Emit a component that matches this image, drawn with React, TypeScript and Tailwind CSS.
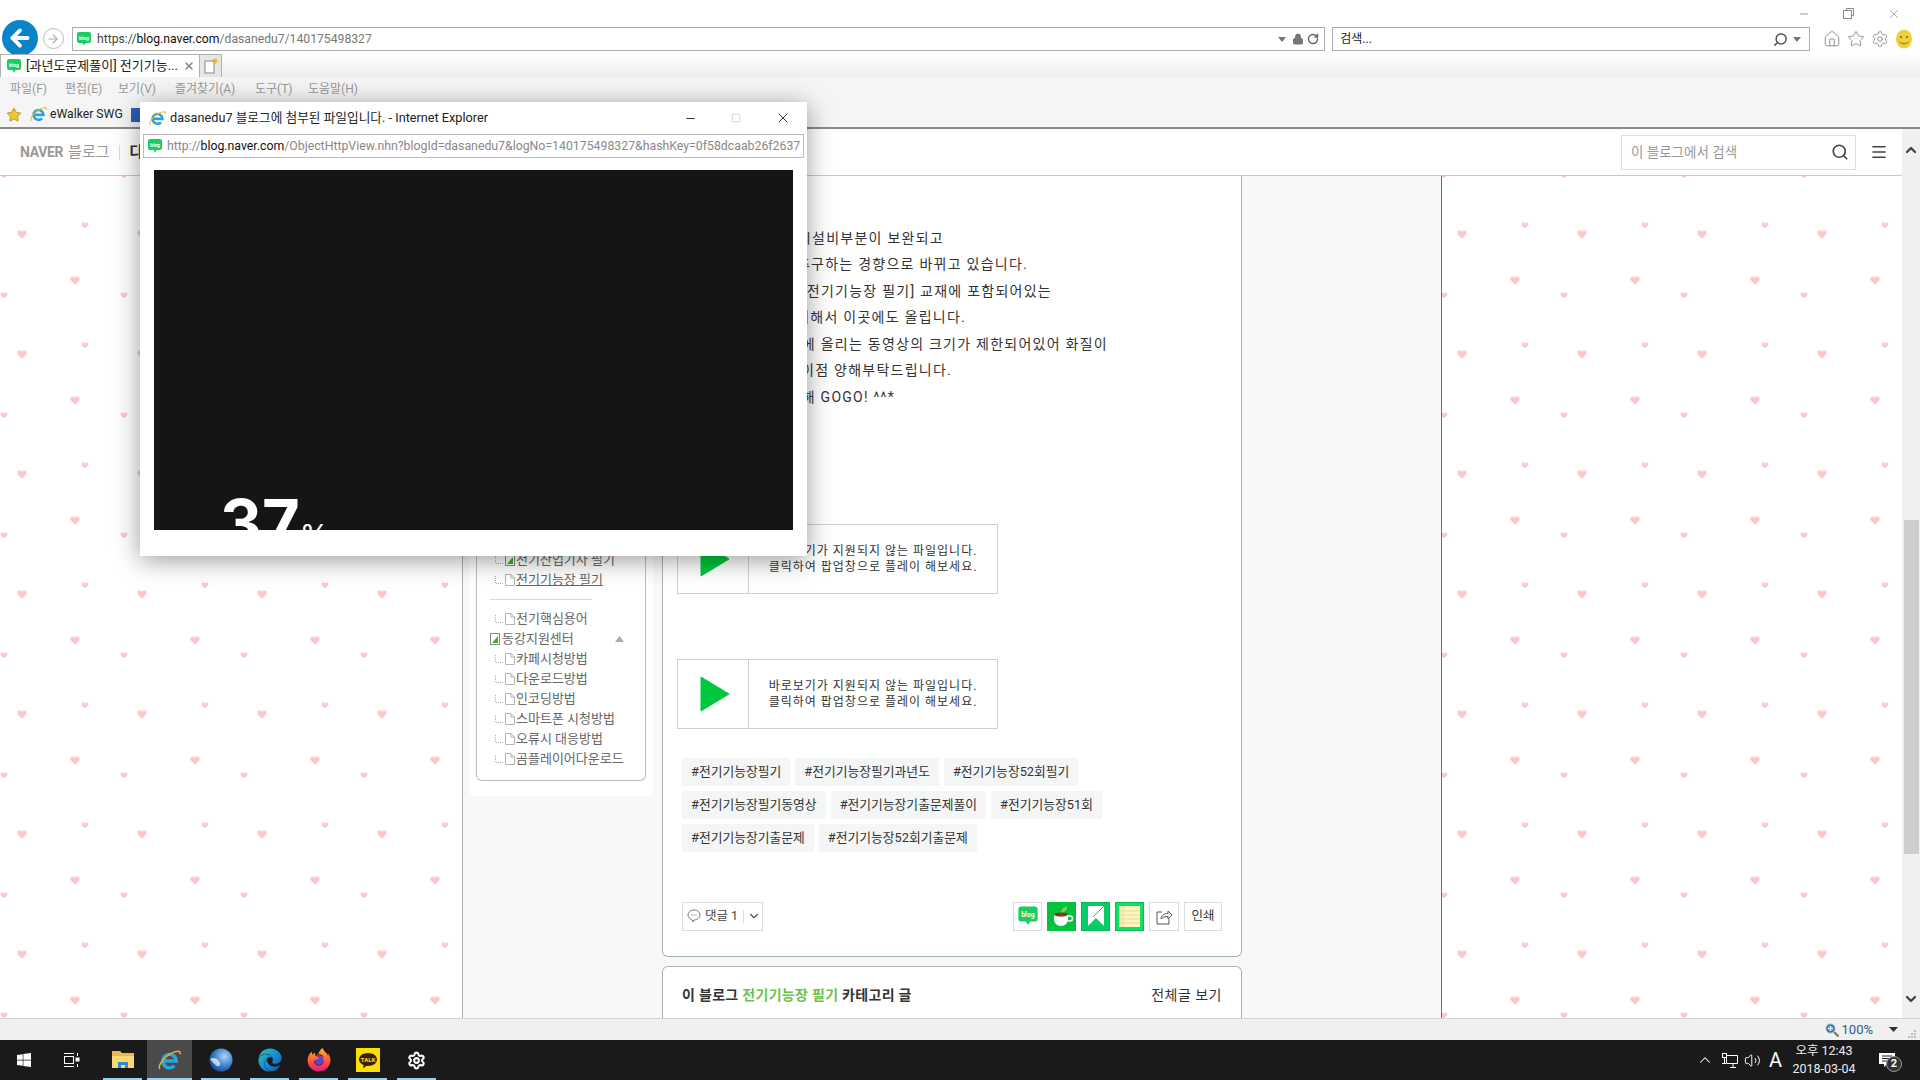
import React from "react";
import { ArrowLeft, ArrowRight, ChevronDown, ChevronUp, Home, Lock, Menu, RotateCw, Search, Settings, Star, Volume2, X, Minus, Square } from "lucide-react";
import { FaEdge, FaFirefoxBrowser, FaWindows } from "react-icons/fa";

const bodyLines = [
  { text: "이번 전기기능장 필기시험부터 시설비부분이 보완되고", w: "w-[281px]" },
  { text: "최근 시험은 실무를 추구하는 경향으로 바뀌고 있습니다.", w: "w-[365px]" },
  { text: "그래서 다산에듀 [전기기능장 필기] 교재에 포함되어있는", w: "w-[389px]" },
  { text: "수험생 여러분을 위해서 이곳에도 올립니다.", w: "w-[303px]" },
  { text: "블로그에 올리는 동영상의 크기가 제한되어있어 화질이", w: "w-[445px]" },
  { text: "조금 떨어지는 이점 양해부탁드립니다.", w: "w-[289px]" },
  { text: "전기기능장 합격을 향해 GOGO! ^^*", w: "w-[232px]" },
];

const tagRows = [
  ["#전기기능장필기", "#전기기능장필기과년도", "#전기기능장52회필기"],
  ["#전기기능장필기동영상", "#전기기능장기출문제풀이", "#전기기능장51회"],
  ["#전기기능장기출문제", "#전기기능장52회기출문제"],
];

const sideItems = [
  { label: "전기산업기사 필기", kind: "folder" },
  { label: "전기기능장 필기", kind: "doc", active: true },
  { label: "", kind: "line" },
  { label: "전기핵심용어", kind: "doc" },
  { label: "동강지원센터", kind: "root" },
  { label: "카페시청방법", kind: "doc" },
  { label: "다운로드방법", kind: "doc" },
  { label: "인코딩방법", kind: "doc" },
  { label: "스마트폰 시청방법", kind: "doc" },
  { label: "오류시 대응방법", kind: "doc" },
  { label: "곰플레이어다운로드", kind: "doc" },
];

const menus = [
  { label: "파일(F)", w: "w-[55px]" },
  { label: "편집(E)", w: "w-[53px]" },
  { label: "보기(V)", w: "w-[57px]" },
  { label: "즐겨찾기(A)", w: "w-[80px]" },
  { label: "도구(T)", w: "w-[53px]" },
  { label: "도움말(H)", w: "w-[60px]" },
];

function BlogIcon({ size = 16 }: { size?: number }) {
  return (
    <svg width={size} height={size} viewBox="0 0 16 16" className="shrink-0">
      <path d="M3 1h10a2 2 0 0 1 2 2v7a2 2 0 0 1-2 2H9.6L8 14.5 6.4 12H3a2 2 0 0 1-2-2V3a2 2 0 0 1 2-2z" fill="#19ce60" />
      <text x="8" y="8.6" textAnchor="middle" fontSize="5" fontWeight="700" fill="#fff" fontFamily="Roboto, sans-serif">blog</text>
    </svg>
  );
}

function IeIcon({ size = 18 }: { size?: number }) {
  return (
    <svg width={size} height={size} viewBox="0 0 24 24" className="shrink-0">
      <path d="M5.5 12.5h13.5a7 7 0 1 0-2 5" fill="none" stroke="#2ba3e0" strokeWidth="3.6" />
      <path d="M2 21C-1 17 8 7 14 4.5c5-2.5 10-3.5 9 1" fill="none" stroke="#e8b71c" strokeWidth="1.5" />
    </svg>
  );
}

function Hearts() {
  const heart = "M0 -1.6C-.8 -3 -3.6 -3.2 -3.6 -.9C-3.6 .9 -1.4 2.2 0 3.4C1.4 2.2 3.6 .9 3.6 -.9C3.6 -3.2 .8 -3 0 -1.6Z";
  return (
    <svg className="absolute inset-0 h-full w-full">
      <defs>
        <pattern id="hearts" width="120" height="120" x="0" y="65" patternUnits="userSpaceOnUse">
          <path d={heart} fill="#ffc7c9" transform="translate(22 113) scale(1.3)" />
          <path d={heart} fill="#ffc7c9" transform="translate(85 104) scale(.95)" />
          <path d={heart} fill="#ffc7c9" transform="translate(75 39) scale(1.3)" />
          <path d={heart} fill="#ffc7c9" transform="translate(4 54) scale(.95)" />
        </pattern>
      </defs>
      <rect width="100%" height="100%" fill="url(#hearts)" />
    </svg>
  );
}

function PlayBox({ className }: { className?: string }) {
  return (
    <div className={`ml-[14px] flex h-[70px] w-[321px] border border-[#cfcfcf] bg-white ${className}`}>
      <div className="flex w-[71px] items-center justify-center border-r border-[#cfcfcf] pl-[3px]">
        <svg width="30" height="36" viewBox="0 0 30 36">
          <path d="M1 1 29 18 1 35z" fill="#00c73c" stroke="#00c73c" strokeLinejoin="round" />
        </svg>
      </div>
      <div className="flex flex-1 flex-col items-center justify-center text-[12px] leading-[16px] tracking-[1px] text-[#333]">
        <span>바로보기가 지원되지 않는 파일입니다.</span>
        <span>클릭하여 팝업창으로 플레이 해보세요.</span>
      </div>
    </div>
  );
}

function SideRow({ item }: { item: (typeof sideItems)[number] }) {
  if (item.kind === "line") {
    return <div className="mx-[13px] my-[9px] h-px w-[102px] shrink-0 bg-[#d8d8d8]" />;
  }
  if (item.kind === "root") {
    return (
      <div className="flex h-5 shrink-0 items-center pl-[13px] text-[13px] text-[#666]">
        <svg width="10" height="12" viewBox="0 0 10 12" className="mr-[2px]">
          <rect x=".5" y=".5" width="9" height="11" fill="#fff" stroke="#8a8a8a" />
          <path d="M2 10 8 3v7z" fill="#4aa82c" />
        </svg>
        {item.label}
        <svg width="9" height="6" viewBox="0 0 9 6" className="ml-[41px]">
          <path d="M4.5 0 9 6H0z" fill="#aaa" />
        </svg>
      </div>
    );
  }
  return (
    <div className="flex h-5 shrink-0 items-center pl-[18px] text-[13px] text-[#666]">
      <svg width="9" height="9" viewBox="0 0 9 9" className="mr-[1px]">
        <path d="M.5 0v7.5H8" fill="none" stroke="#aaa" strokeDasharray="1 1" />
      </svg>
      <svg width="10" height="12" viewBox="0 0 10 12" className="mr-[1px]">
        {item.kind === "doc" ? (
          <path d="M.5.5H6L9.5 4v7.5H.5zM6 .5V4h3.5" fill="#fff" stroke="#b5b5b5" />
        ) : (
          <>
            <rect x=".5" y=".5" width="9" height="11" fill="#fff" stroke="#8a8a8a" />
            <path d="M2 10 8 3v7z" fill="#4aa82c" />
          </>
        )}
      </svg>
      <span className={item.active ? "underline" : ""}>{item.label}</span>
    </div>
  );
}

function Chrome() {
  return (
    <div className="shrink-0 border-b-2 border-[#8a8a8a] bg-white">
      {/* title + address row */}
      <div className="flex h-[54px] items-start bg-white">
        <div className="mt-[20px] ml-[2px] flex h-[36px] w-[36px] items-center justify-center rounded-full bg-[#0a84c8]">
          <ArrowLeft size={26} strokeWidth={3.5} className="text-white" />
        </div>
        <div className="mt-[28px] ml-[5px] flex h-[21px] w-[21px] items-center justify-center rounded-full border border-[#bbb]">
          <ArrowRight size={14} className="text-[#aaa]" />
        </div>
        <div className="mt-[27px] ml-[8px] flex h-[24px] w-[1254px] items-center border border-[#adadad] pr-[5px] pl-[3px]">
          <BlogIcon size={16} />
          <span className="ml-[5px] text-[12.2px] text-[#444]">
            https://<span className="text-[#111]">blog.naver.com</span>
            <span className="text-[#777]">/dasanedu7/140175498327</span>
          </span>
          <svg width="8" height="5" viewBox="0 0 8 5" className="mr-[6px] ml-auto">
            <path d="M0 0h8L4 5z" fill="#777" />
          </svg>
          <Lock size={12} fill="#777" className="mr-[3px] text-[#777]" />
          <RotateCw size={12} strokeWidth={3} className="text-[#666]" />
        </div>
        <div className="mt-[27px] ml-[7px] flex h-[24px] w-[478px] items-center border border-[#adadad] pr-[8px] pl-[7px]">
          <span className="text-[12px] text-[#222]">검색...</span>
          <Search size={15} strokeWidth={2.4} className="ml-auto -scale-x-100 text-[#555]" />
          <svg width="8" height="5" viewBox="0 0 8 5" className="ml-[5px]">
            <path d="M0 0h8L4 5z" fill="#777" />
          </svg>
        </div>
        <div className="ml-[12px] flex w-[98px] flex-col items-end">
          <div className="flex h-[27px] w-[122px] shrink-0 items-center justify-between pr-[19px]">
            <Minus size={12} className="text-[#999]" />
            <svg width="11" height="11" viewBox="0 0 11 11" fill="none" stroke="#888">
              <path d="M3.5 2.5V.5h7v7h-2" />
              <rect x=".5" y="2.5" width="8" height="8" />
            </svg>
            <X size={14} strokeWidth={1.2} className="text-[#888]" />
          </div>
          <div className="flex h-[24px] w-[98px] items-center gap-[6px] pl-[1px]">
            <Home size={18} strokeWidth={1.2} className="text-[#888]" />
            <Star size={18} strokeWidth={1.2} className="text-[#888]" />
            <Settings size={18} strokeWidth={1.2} className="text-[#888]" />
            <svg width="18" height="20" viewBox="0 0 18 20">
              <ellipse cx="9" cy="10" rx="8" ry="9.5" fill="#f0cf3c" />
              <circle cx="6" cy="8" r="1" fill="#7a6410" />
              <circle cx="12" cy="8" r="1" fill="#7a6410" />
              <path d="M4.5 12.5c2.5 3 6.5 3 9 0" fill="none" stroke="#7a6410" />
            </svg>
          </div>
        </div>
      </div>
      {/* tab row */}
      <div className="flex h-[23px] bg-gradient-to-b from-white to-[#ededed]">
        <div className="flex w-[200px] items-center border-x border-t border-[#b0b0b0] bg-white pr-[4px] pl-[5px]">
          <BlogIcon size={16} />
          <span className="ml-[4px] text-[13px] whitespace-nowrap text-[#222]">[과년도문제풀이] 전기기능...</span>
          <X size={12} strokeWidth={3} className="ml-auto text-[#888]" />
        </div>
        <div className="flex w-[22px] items-center justify-center border-t border-r border-[#b0b0b0] bg-[#e6e6e6]">
          <svg width="14" height="16" viewBox="0 0 14 16">
            <rect x="1" y="3" width="9" height="12" fill="#fff" stroke="#888" />
            <path d="M11 0v6M8 3h6M9 1l4 4M13 1 9 5" stroke="#f4a812" />
          </svg>
        </div>
      </div>
      {/* menu row */}
      <div className="flex h-[25px] items-center bg-[#f5f5f5] pb-[2px] pl-[10px] text-[12px] text-[#999]">
        {menus.map((m) => (
          <span key={m.label} className={m.w}>
            {m.label}
          </span>
        ))}
      </div>
      {/* favorites row */}
      <div className="flex h-[25px] items-center bg-[#f5f5f5] pl-[6px] text-[12.2px] text-[#222]">
        <Star size={16} fill="#f2c230" strokeWidth={1.2} className="text-[#a98b1c]" />
        <div className="ml-[8px]">
          <IeIcon size={17} />
        </div>
        <span className="ml-[3px]">eWalker SWG</span>
        <div className="ml-[8px] h-[14px] w-[10px] bg-[#2a5fb8]" />
      </div>
    </div>
  );
}

function BlogHeader() {
  return (
    <div className="flex h-[47px] shrink-0 items-center border-b border-[#c8c8c8] bg-white pl-[20px]">
      <span className="text-[14px] font-bold tracking-tight text-[#999]">NAVER</span>
      <span className="ml-[5px] text-[15px] text-[#999]">블로그</span>
      <div className="ml-[9px] h-[15px] w-px bg-[#ddd]" />
      <span className="ml-[10px] text-[15px] font-bold text-[#333]">다</span>
      <div className="ml-auto flex h-[35px] w-[235px] items-center border border-[#ddd] pr-[6px] pl-[9px]">
        <span className="text-[13.5px] text-[#999]">이 블로그에서 검색</span>
        <Search size={18} strokeWidth={2.2} className="ml-auto text-[#444]" />
      </div>
      <Menu size={18} strokeWidth={2.2} className="mr-[14px] ml-[14px] text-[#444]" />
    </div>
  );
}

function PostCard() {
  return (
    <div className="w-[580px] shrink-0 rounded-b-md border-x border-b border-[#a5b5b5] bg-white pt-[49px] pb-[25px]">
      {bodyLines.map((l) => (
        <div key={l.text} className={`flex h-[26.5px] items-center justify-end text-[14px] tracking-[1.25px] whitespace-nowrap text-[#333] ${l.w}`}>
          <span>{l.text}</span>
        </div>
      ))}
      <PlayBox className="mt-[113px]" />
      <PlayBox className="mt-[65px]" />
      <div className="mt-[29px] ml-[19px] flex flex-col gap-[5px]">
        {tagRows.map((row) => (
          <div key={row[0]} className="flex gap-[5px]">
            {row.map((t) => (
              <span key={t} className="flex h-[28px] items-center bg-[#f4f6f6] px-[9px] text-[12.8px] text-[#333]">
                {t}
              </span>
            ))}
          </div>
        ))}
      </div>
      <div className="mt-[50px] flex h-[29px] items-stretch px-[19px]">
        <div className="flex w-[81px] items-center border border-[#ddd] pl-[4px] text-[12.5px] text-[#444]">
          <svg width="14" height="14" viewBox="0 0 14 14">
            <path d="M7 1c3.3 0 6 2.2 6 5s-2.7 5-6 5l-1 2-1-2.3C2.7 10 1 8.2 1 6c0-2.8 2.7-5 6-5z" fill="none" stroke="#777" />
            <path d="M4.5 6h1M6.5 6h1M8.5 6h1" stroke="#777" />
          </svg>
          <span className="ml-[4px]">댓글 1</span>
          <div className="ml-[5px] h-[13px] w-px bg-[#ddd]" />
          <ChevronDown size={14} className="ml-[3px] text-[#555]" />
        </div>
        <div className="ml-auto flex gap-[5px]">
          <div className="flex w-[29px] items-center justify-center border border-[#ddd]">
            <BlogIcon size={22} />
          </div>
          <div className="flex w-[29px] items-center justify-center bg-[#03c23c]">
            <svg width="24" height="24" viewBox="0 0 24 24">
              <path d="M11 9c0-4 3-6 6-7 0 4-2 7-6 7z" fill="#7fd04a" />
              <path d="M4 10h14v5c0 4-3 7-7 7s-7-3-7-7z" fill="#fff" />
              <ellipse cx="11" cy="10.5" rx="7" ry="2" fill="#7a3a1c" />
              <path d="M18 12h2a2 2 0 0 1 0 5h-2" fill="none" stroke="#fff" strokeWidth="1.5" />
            </svg>
          </div>
          <div className="flex w-[29px] items-center justify-center border border-[#0ab85a] bg-[#08cc68]">
            <svg width="20" height="22" viewBox="0 0 20 22">
              <path d="M2 1h16v20l-8-8-8 8z" fill="#fff" />
              <path d="M18 1 7 12" stroke="#08cc68" strokeWidth="1" />
            </svg>
          </div>
          <div className="flex w-[29px] items-center justify-center border border-[#0ab85a] bg-[#0ee35f]">
            <svg width="21" height="21" viewBox="0 0 21 21">
              <rect width="21" height="21" fill="#fbf4bf" />
              <path d="M0 5h21M0 9h21M0 13h21M0 17h21" stroke="#e8dd9a" />
              <path d="M4 0v21" stroke="#d9dda0" />
            </svg>
          </div>
          <div className="flex w-[30px] items-center justify-center border border-[#ddd]">
            <svg width="17" height="17" viewBox="0 0 17 17">
              <path d="M6 4H1v12h12v-5" fill="none" stroke="#555" />
              <path d="M5 11c.5-4 3-5.5 7-5.5V3l4 4-4 4V8.5c-3 0-5 .5-7 2.5z" fill="none" stroke="#555" />
            </svg>
          </div>
          <div className="flex w-[38px] items-center justify-center border border-[#ddd] text-[12.5px] text-[#333]">인쇄</div>
        </div>
      </div>
    </div>
  );
}

function TaskIcon({ children, active }: { children: React.ReactNode; active?: boolean }) {
  return (
    <div className={`relative flex h-full items-center justify-center ${active ? "mr-[4px] w-[45px] bg-[#4a4a4a]" : "w-[49px]"}`}>
      {children}
      <div className={`absolute bottom-0 h-[2px] bg-[#99d1f0] ${active ? "right-0 left-0" : "right-[5px] left-[5px]"}`} />
    </div>
  );
}

function Taskbar() {
  return (
    <div className="flex h-[40px] shrink-0 items-center bg-[#1a1a1a] text-white">
      <div className="flex w-[48px] justify-center">
        <FaWindows size={16} />
      </div>
      <div className="mr-[4px] flex w-[46px] justify-center">
        <svg width="17" height="16" viewBox="0 0 17 16" fill="none" stroke="#fff">
          <path d="M1 1.5h10M1 14.5h10" />
          <rect x="1.5" y="4.5" width="9" height="7" />
          <path d="M14.5 1v3M14.5 12v3" />
          <rect x="13" y="6" width="3" height="3" fill="#fff" />
        </svg>
      </div>
      <TaskIcon>
        <svg width="22" height="20" viewBox="0 0 22 20">
          <path d="M0 1h8l2 2h12v14H0z" fill="#e8b94c" />
          <path d="M0 6h22v12H0z" fill="#fad775" />
          <path d="M6 18v-6h10v6h-3v-3H9v3z" fill="#2c8ad6" />
        </svg>
      </TaskIcon>
      <TaskIcon active>
        <IeIcon size={23} />
      </TaskIcon>
      <TaskIcon>
        <svg width="24" height="24" viewBox="0 0 24 24">
          <defs>
            <radialGradient id="globe" cx=".65" cy=".35" r=".8">
              <stop offset="0" stopColor="#a9d6f5" />
              <stop offset=".6" stopColor="#2f74c4" />
              <stop offset="1" stopColor="#123c80" />
            </radialGradient>
          </defs>
          <circle cx="12" cy="12" r="11.5" fill="url(#globe)" />
          <path d="M1 11c3-2 6-1 8 1s3 5 1 6-5-2-9-7z" fill="#dfeaf5" opacity=".8" />
        </svg>
      </TaskIcon>
      <TaskIcon>
        <svg width="0" height="0" className="absolute">
          <defs>
            <linearGradient id="edgeFill" x1="0" y1="0" x2="1" y2="1">
              <stop offset="0" stopColor="#2cc6a8" />
              <stop offset=".5" stopColor="#1a8fd6" />
              <stop offset="1" stopColor="#0f4fa8" />
            </linearGradient>
            <linearGradient id="foxFill" x1="0" y1="0" x2="0" y2="1">
              <stop offset="0" stopColor="#ffb326" />
              <stop offset=".6" stopColor="#ff4f3a" />
              <stop offset="1" stopColor="#e31587" />
            </linearGradient>
          </defs>
        </svg>
        <FaEdge size={24} className="fill-[url(#edgeFill)]" />
      </TaskIcon>
      <TaskIcon>
        <div className="relative flex items-center justify-center">
          <div className="absolute h-[10px] w-[10px] rounded-full bg-[#6a3fc4]" />
          <FaFirefoxBrowser size={24} className="relative fill-[url(#foxFill)]" />
        </div>
      </TaskIcon>
      <TaskIcon>
        <div className="flex h-[24px] w-[24px] items-center justify-center bg-[#fae100]">
          <svg width="20" height="17" viewBox="0 0 20 17">
            <path d="M10 1c5 0 9 2.8 9 6.500S15 14 10 14c-.6 0-1.2 0-1.800-.1L5 16.500l.6-3.500C2.800 11.800 1 9.800 1 7.500 1 3.800 5 1 10 1z" fill="#3b1e1e" />
            <text x="10" y="10" textAnchor="middle" fontSize="6" fontWeight="700" fill="#fae100" fontFamily="Roboto, sans-serif">TALK</text>
          </svg>
        </div>
      </TaskIcon>
      <TaskIcon>
        <Settings size={19} strokeWidth={2.6} />
      </TaskIcon>
      {/* tray */}
      <div className="ml-auto flex items-center">
        <ChevronUp size={18} strokeWidth={1.4} />
        <svg width="17" height="15" viewBox="0 0 17 15" fill="none" stroke="#fff" className="ml-[7px]">
          <rect x="1.5" y=".5" width="4" height="4" fill="#1a1a1a" />
          <path d="M5.500 2.500h11v8h-11zM1 10.500h4M9 14.500h6M12 10.500v4M3.500 4.500v6" />
        </svg>
        <Volume2 size={17} strokeWidth={1.4} className="ml-[6px]" />
        <span className="ml-[8px] text-[20px] leading-none">A</span>
        <div className="flex w-[84px] flex-col items-center text-[12.5px] leading-[18px] text-[#eee]">
          <span>오후 12:43</span>
          <span>2018-03-04</span>
        </div>
        <div className="relative mr-[21px] ml-[13px] flex h-[24px] w-[20px] items-center">
          <svg width="16" height="15" viewBox="0 0 16 15">
            <path d="M0 0h16v11H8l-3 3v-3H0z" fill="#fff" />
            <path d="M3 3h10M3 5.500h10M3 8h7" stroke="#1a1a1a" />
          </svg>
          <span className="absolute top-[8px] left-[7px] flex h-[16px] w-[16px] items-center justify-center rounded-full border border-[#999] bg-[#333] text-[11px] font-bold">2</span>
        </div>
      </div>
    </div>
  );
}

function Popup() {
  return (
    <div className="absolute top-[102px] left-[140px] flex h-[454px] w-[667px] flex-col bg-white shadow-[0_4px_24px_rgba(0,0,0,0.4)]">
      <div className="flex h-[32px] items-center pr-[16px] pl-[9px] text-[12.7px] text-[#222]">
        <IeIcon size={17} />
        <span className="ml-[4px]">dasanedu7 블로그에 첨부된 파일입니다. - Internet Explorer</span>
        <Minus size={13} className="ml-auto text-[#333]" />
        <Square size={10} className="ml-[34px] text-[#ccc]" />
        <X size={16} strokeWidth={1.4} className="ml-[34px] text-[#333]" />
      </div>
      <div className="mx-[3px] flex h-[24px] items-center overflow-hidden border border-[#bcbcbc] pl-[3px] text-[12.3px] whitespace-nowrap text-[#888]">
        <BlogIcon size={16} />
        <span className="ml-[4px]">
          http://<span className="text-[#111]">blog.naver.com</span>/ObjectHttpView.nhn?blogId=dasanedu7&amp;logNo=140175498327&amp;hashKey=0f58dcaab26f2637
        </span>
      </div>
      <div className="mx-[14px] mt-[12px] h-[360px] overflow-hidden bg-[#151515] pt-[323px] pl-[66px]">
        <span className="font-[Inter,sans-serif] text-[65px] leading-[60px] font-bold text-white">37</span>
        <span className="font-[Inter,sans-serif] text-[30px] leading-[60px] text-white">%</span>
      </div>
    </div>
  );
}

export default function App() {
  return (
    <div className="relative flex h-[1080px] w-[1920px] flex-col overflow-hidden bg-white font-['Roboto','Noto_Sans_CJK_KR',sans-serif]">
      <Chrome />
      <div className="flex min-h-0 flex-1">
        <div className="flex min-w-0 flex-1 flex-col">
          <BlogHeader />
          <div className="relative flex min-h-0 flex-1 overflow-hidden">
            <Hearts />
            <div className="relative ml-[462px] flex w-[980px] shrink-0 border-x border-l-[#a9b3b3] border-r-[#6e6e6e] bg-[#f8f8f8]">
              <div className="w-[199px] shrink-0">
                <div className="ml-[6px] flex h-[620px] w-[184px] flex-col rounded-b-md bg-white px-[7px] pb-[15px]">
                  <div className="flex flex-1 flex-col justify-end overflow-hidden rounded-b-md border-x border-b border-[#bdbdbd] pb-[11px]">
                    {sideItems.map((item, i) => (
                      <SideRow key={i} item={item} />
                    ))}
                  </div>
                </div>
              </div>
              <div className="flex flex-col gap-[9px]">
                <PostCard />
                <div className="flex h-[60px] w-[580px] shrink-0 items-start justify-between rounded-t-md border-x border-t border-[#a5b5b5] bg-white px-[19px] pt-[18px] text-[14px] tracking-[.3px]">
                  <span className="font-bold text-[#333]">
                    이 블로그 <span className="text-[#6cc24a]">전기기능장 필기</span> 카테고리 글
                  </span>
                  <span className="tracking-[.5px] text-[#333]">전체글 보기</span>
                </div>
              </div>
            </div>
          </div>
        </div>
        {/* scrollbar */}
        <div className="flex w-[18px] shrink-0 flex-col items-center bg-[#f0f0f0]">
          <ChevronUp size={16} strokeWidth={3.5} className="mt-[13px] text-[#444]" />
          <div className="mt-[362px] h-[334px] w-[15px] bg-[#cdcdcd]" />
          <ChevronDown size={16} strokeWidth={3.5} className="mt-[137px] text-[#444]" />
        </div>
      </div>
      {/* status bar */}
      <div className="flex h-[22px] shrink-0 items-center border-t border-[#d5d5d5] bg-[#f0f0f0] pr-[3px] text-[13px] text-[#2a5a88]">
        <svg width="14" height="14" viewBox="0 0 14 14" className="ml-auto">
          <path d="M9 9l4.500 4.500" stroke="#8a6a3a" strokeWidth="2" />
          <circle cx="5.500" cy="5.500" r="4.500" fill="#2f7fd0" stroke="#9ab" />
          <path d="M3 5.500h5M5.500 3v5" stroke="#fff" strokeWidth="1.4" />
        </svg>
        <span className="ml-[3px]">100%</span>
        <svg width="9" height="5" viewBox="0 0 9 5" className="ml-[16px]">
          <path d="M0 0h9L4.500 5z" fill="#333" />
        </svg>
        <svg width="10" height="10" viewBox="0 0 10 10" fill="#bbb" className="mt-[9px] ml-[9px]">
          <rect x="7" y="1" width="2" height="2" />
          <rect x="4" y="4" width="2" height="2" />
          <rect x="7" y="4" width="2" height="2" />
          <rect x="1" y="7" width="2" height="2" />
          <rect x="4" y="7" width="2" height="2" />
          <rect x="7" y="7" width="2" height="2" />
        </svg>
      </div>
      <Taskbar />
      <Popup />
    </div>
  );
}
